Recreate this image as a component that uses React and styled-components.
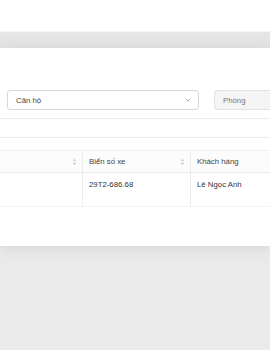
import React from "react";
import styled, { createGlobalStyle } from "styled-components";

const Global = createGlobalStyle`
  html, body { margin: 0; padding: 0; }
  body {
    background: #eaeaea;
    font-family: "Liberation Sans", Arial, Helvetica, sans-serif;
    overflow: hidden;
  }
`;

const Page = styled.div`
  width: 270px;
  height: 350px;
  background: #eaeaea;
  display: flex;
  flex-direction: column;
`;

const TopBar = styled.div`
  height: 32px;
  background: #ffffff;
  border-bottom: 1px solid #f4f4f4;
  box-sizing: border-box;
`;

const Band = styled.div`
  height: 16px;
  background: linear-gradient(#e6e6e6, #e1e1e1);
`;

const Card = styled.div`
  height: 198px;
  background: #ffffff;
  box-shadow: 0 4px 12px rgba(0, 0, 0, 0.08);
  position: relative;
  display: flex;
  flex-direction: column;
  padding-top: 42px;
  box-sizing: border-box;
  overflow: hidden;
`;

const FilterRow = styled.div`
  display: flex;
  gap: 15px;
  padding-left: 7px;
`;

const Field = styled.div`
  flex: 0 0 ${(p) => p.$w}px;
  height: 20px;
  box-sizing: border-box;
  border: 1px solid ${(p) => (p.$disabled ? "#e0e0e0" : "#d8d8d8")};
  border-radius: 3px;
  background: ${(p) => (p.$disabled ? "#f5f5f5" : "#ffffff")};
  display: flex;
  align-items: center;
  justify-content: space-between;
  padding: 0 7px 0 8px;
  font-size: 7.8px;
  color: ${(p) => (p.$disabled ? "#777" : "#444")};
`;

const Chevron = () => (
  <svg width="6" height="4" viewBox="0 0 6 4">
    <path d="M0.7 0.8 L3 3.1 L5.3 0.8" fill="none" stroke="#888" strokeWidth="0.8" />
  </svg>
);

const Divider = styled.div`
  margin-top: 8px;
  height: 20px;
  border-top: 1px solid #ececec;
  border-bottom: 1px solid #ececec;
  box-sizing: border-box;
`;

const Table = styled.div`
  margin-top: 12px;
  display: grid;
  grid-template-columns: 83px 108px 1fr;
  border-top: 1px solid #f0f0f0;
`;

const HeadCell = styled.div`
  height: 22px;
  box-sizing: border-box;
  background: #fcfcfc;
  border-bottom: 1px solid #ececec;
  border-right: ${(p) => (p.$last ? "none" : "1px solid #ececec")};
  display: flex;
  align-items: center;
  justify-content: space-between;
  padding: 0 5px 0 6px;
  font-size: 7.8px;
  color: #444;
`;

const BodyCell = styled.div`
  height: 34px;
  box-sizing: border-box;
  border-bottom: 1px solid #f2f2f2;
  border-right: ${(p) => (p.$last ? "none" : "1px solid #ececec")};
  padding: 7px 6px 0 6px;
  font-size: 7.8px;
  color: #333;
`;

const Sort = () => (
  <svg width="5" height="8" viewBox="0 0 5 8">
    <path d="M2.5 0.6 L4.4 3.2 L0.6 3.2 Z" fill="#d2d2d2" />
    <path d="M2.5 7.4 L4.4 4.8 L0.6 4.8 Z" fill="#d2d2d2" />
  </svg>
);

export default function App() {
  return (
    <>
      <Global />
      <Page>
        <TopBar />
        <Band />
        <Card>
          <FilterRow>
            <Field $w={192}>
              <span>Căn hộ</span>
              <Chevron />
            </Field>
            <Field $w={80} $disabled>
              <span>Phòng</span>
            </Field>
          </FilterRow>
          <Divider />
          <Table>
            <HeadCell>
              <span />
              <Sort />
            </HeadCell>
            <HeadCell>
              <span>Biển số xe</span>
              <Sort />
            </HeadCell>
            <HeadCell $last>
              <span>Khách hàng</span>
            </HeadCell>
            <BodyCell />
            <BodyCell>29T2-686.68</BodyCell>
            <BodyCell $last>Lê Ngọc Anh</BodyCell>
          </Table>
        </Card>
      </Page>
    </>
  );
}
